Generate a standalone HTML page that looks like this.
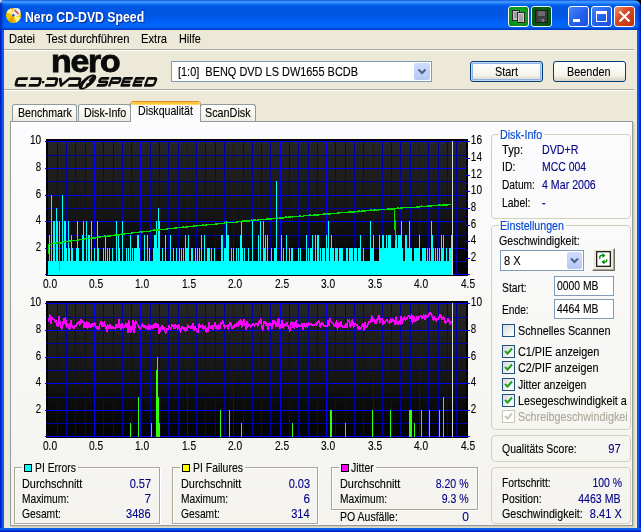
<!DOCTYPE html>
<html><head><meta charset="utf-8"><title>Nero CD-DVD Speed</title>
<style>
html,body{margin:0;padding:0;}
body{width:641px;height:532px;overflow:hidden;position:relative;background:#ece9d8;font-family:"Liberation Sans",sans-serif;font-size:11px;color:#000;}
.abs{position:absolute;}
.t{position:absolute;white-space:nowrap;line-height:12px;font-size:12.4px;margin-top:-0.35px;-webkit-text-stroke:0.12px currentColor;}
.v{color:#000088;}
#title{position:absolute;left:0;top:0;width:641px;height:30px;border-radius:4px 7px 0 0;background:linear-gradient(to bottom,#0a48d8 0%,#3a94ff 4%,#3a94ff 8%,#1070f0 14%,#0058e8 20%,#0054e0 35%,#0056e4 50%,#005cf0 65%,#0066fc 80%,#0066fc 90%,#0050e0 94%,#0034c0 100%);}
#bl{position:absolute;left:0;top:30px;width:4px;height:502px;background:linear-gradient(to right,#0019cf 0,#0831d9 40%,#166aee 70%,#0855dd 100%);}
#br{position:absolute;left:637px;top:30px;width:4px;height:502px;background:linear-gradient(to left,#0019cf 0,#0831d9 40%,#166aee 70%,#0855dd 100%);}
#bb{position:absolute;left:0;top:528px;width:641px;height:4px;background:linear-gradient(to bottom,#0855dd 0,#166aee 30%,#0831d9 60%,#0019cf 100%);}
#ttext{position:absolute;left:25px;top:9.2px;color:#fff;font-weight:bold;font-size:14.3px;line-height:16px;text-shadow:1px 1px 1px #0a2a8a;white-space:nowrap;}
.cb{position:absolute;top:6px;width:19px;height:19px;border:1px solid #fff;border-radius:3px;}
.sep{position:absolute;left:4px;width:630px;height:1px;}
#tabpage{position:absolute;left:10px;top:121px;width:621px;height:403px;background:linear-gradient(to bottom,#fcfcfe 0,#f4f3ee 100%);border:1px solid #919b9c;box-shadow:1px 1px 0 #d2cdb8, 2px 2px 0 #dedac6;}
.tab{position:absolute;top:104px;height:17px;border:1px solid #919b9c;border-bottom:none;border-radius:3px 3px 0 0;background:linear-gradient(to bottom,#ffffff 0,#f5f4ea 60%,#ecebe0 100%);}
.gb{position:absolute;border:1px solid #d0d0bf;border-radius:4px;}
.gl{position:absolute;white-space:nowrap;font-size:11px;line-height:12px;color:#0046d5;background:#f8f8f6;padding:0 1px;}
.btn{position:absolute;border:1px solid #003c74;border-radius:3px;background:linear-gradient(to bottom,#ffffff 0,#f5f4ea 70%,#d6d0c5 100%);box-sizing:border-box;text-align:center;font-size:11px;}
.edit{position:absolute;border:1px solid #7f9db9;background:#fff;box-sizing:border-box;}
.chk{position:absolute;width:11px;height:11px;border:1px solid #1c5180;background:linear-gradient(135deg,#dcdcd7 0,#ffffff 100%);}
.gbe{position:absolute;border:1px solid #a7a697;box-shadow:1px 1px 0 #fff, inset 1px 1px 0 #fff;}
#root{position:absolute;left:0;top:0;width:641px;height:532px;will-change:transform;}

</style></head>
<body>
<div id="root">
<div class="abs" style="left:0;top:0;width:8px;height:8px;background:#f0d8d4;"></div><div class="abs" style="left:633px;top:0;width:8px;height:8px;background:#000;"></div>
<div id="title"></div>
<div class="abs" style="left:0;top:3px;width:4px;height:27px;background:linear-gradient(to right,rgba(0,10,150,0.65),rgba(0,20,180,0.35) 60%,rgba(0,30,200,0));"></div><div class="abs" style="left:637px;top:6px;width:4px;height:24px;background:linear-gradient(to left,rgba(0,10,150,0.75),rgba(0,20,180,0.4) 60%,rgba(0,30,200,0));"></div>
<div id="bl"></div><div id="br"></div><div id="bb"></div>
<!-- title icon -->
<svg class="abs" style="left:5px;top:7px" width="18" height="18" viewBox="0 0 18 18">
<circle cx="8.5" cy="8.5" r="7.5" fill="#f7c400"/>
<path d="M8.5 8.5 L1.5 5 A7.5 7.5 0 0 1 6 1.4 Z" fill="#fff28a"/>
<path d="M8.5 8.5 L15.7 10.5 A7.5 7.5 0 0 1 11.5 15.4 Z" fill="#fff28a"/>
<path d="M8.5 8.5 L3 13.5 A7.5 7.5 0 0 0 8 16 Z" fill="#e0a000"/>
<circle cx="11.5" cy="5" r="4" fill="#ececec"/>
<path d="M9.5 3 L13.5 7" stroke="#e03010" stroke-width="1.2"/>
<circle cx="8.3" cy="8.3" r="1.3" fill="#2a62d0"/>
</svg>
<div id="ttext" style="transform-origin:0 0;transform:scale(0.857,1);">Nero CD-DVD Speed</div>
<!-- caption buttons -->
<div class="cb" style="left:508px;border-color:#f0fff0;background:radial-gradient(circle at 50% 45%,#1fc030 0,#10a520 45%,#087a14 100%);"></div>
<div class="cb" style="left:531px;border-color:#e8f8e0;background:radial-gradient(circle at 50% 45%,#0c7014 0,#08600f 50%,#054a0a 100%);"></div>
<div class="cb" style="left:568px;background:linear-gradient(135deg,#4886fa 0,#2462ee 50%,#1c50dc 100%);"></div>
<div class="cb" style="left:591px;background:linear-gradient(135deg,#4886fa 0,#2462ee 50%,#1c50dc 100%);"></div>
<div class="cb" style="left:614px;background:linear-gradient(135deg,#f09070 0,#d84820 40%,#c03010 100%);"></div>
<svg class="abs" style="left:508px;top:6px" width="130" height="21" viewBox="0 0 130 21">
<!-- copy icon -->
<rect x="4.500" y="4.500" width="7" height="10" fill="#c4c4c4" stroke="#2a2a2a" stroke-width="1"/>
<path d="M6 7h4M6 9h4M6 11h4" stroke="#7a7a7a" stroke-width="1"/>
<rect x="9.500" y="6.500" width="7" height="10" fill="#d0d0d0" stroke="#2a2a2a" stroke-width="1"/>
<path d="M11 9h4M11 11h4M11 13h4M11 15h4" stroke="#7a7a7a" stroke-width="1"/>
<!-- floppy -->
<rect x="27.500" y="4.500" width="12" height="12" fill="#3c3c3c" stroke="#1a1a1a" stroke-width="1"/>
<rect x="30" y="5" width="7" height="5" fill="#6a6a6a"/>
<rect x="31" y="12" width="6" height="4" fill="#4a4a4a"/><rect x="34" y="13" width="2" height="3" fill="#777"/>
<!-- min -->
<rect x="65" y="13" width="7" height="3" fill="#fff"/>
<!-- max -->
<rect x="88.500" y="6.500" width="10" height="9" fill="none" stroke="#fff" stroke-width="1"/>
<rect x="88" y="5" width="11" height="3" fill="#fff"/>
<!-- close -->
<path d="M111.500 5.500 L121.500 15.500 M121.500 5.500 L111.500 15.500" stroke="#fff" stroke-width="2.200"/>
</svg>

<!-- menu -->
<div class="t" style="left:9.300px;top:33.05px;margin-left:-0.7px;transform-origin:0 0;transform:scaleX(0.902);">Datei</div>
<div class="t" style="left:46.700px;top:33.05px;margin-left:-0.7px;transform-origin:0 0;transform:scaleX(0.905);">Test durchführen</div>
<div class="t" style="left:141.900px;top:33.05px;margin-left:-0.7px;transform-origin:0 0;transform:scaleX(0.902);">Extra</div>
<div class="t" style="left:179.600px;top:33.05px;margin-left:-0.7px;transform-origin:0 0;transform:scaleX(0.875);">Hilfe</div>
<div class="sep" style="top:49px;background:#aca899;"></div>
<div class="sep" style="top:50px;background:#fff;"></div>
<div class="sep" style="top:89px;background:#aca899;"></div>
<div class="sep" style="top:90px;background:#fff;"></div>

<!-- logo -->
<div class="abs" id="nero" style="left:50.5px;top:44.300px;font-weight:bold;font-size:31px;line-height:36px;letter-spacing:-1.1px;transform-origin:0 0;transform:scale(1.09,1);color:#0a0a0a;-webkit-text-stroke:0.9px #0a0a0a;">nero</div>
<svg class="abs" style="left:0;top:70px" width="170" height="22" viewBox="0 70 170 22">
<g transform="translate(16.800,77.300) skewX(-14)" fill="none" stroke="#0c0c0c" stroke-width="2.700" stroke-linejoin="round">
<path d="M11.3 1.300 H2.6 Q0.9 1.300 0.9 3 V6.400 Q0.9 8.100 2.6 8.100 H11.3"/>
<path d="M13.9 1.300 H22.6 Q24.3 1.300 24.3 3 V6.400 Q24.3 8.100 22.6 8.100 H13.9"/>
<path d="M26.300 3.600 h2.300 v2.300 h-2.300 z" fill="#0c0c0c" stroke="none"/>
<path d="M30.3 1.300 H39.0 Q40.7 1.300 40.7 3 V6.400 Q40.7 8.100 39.0 8.100 H30.3"/>
<path d="M43.4 0.600 L46.4 8.100 L53.6 0.600"/>
<path d="M53.5 1.300 H62.2 Q63.9 1.300 63.9 3 V6.400 Q63.9 8.100 62.2 8.100 H53.5"/>
</g>
<g transform="translate(87.500,82) rotate(-38)">
<ellipse cx="0" cy="0" rx="10.500" ry="4.600" fill="#0c0c0c"/>
<path d="M-8 1.500 Q-2 -3.500 8 -1.500 Q0 -1 -5 2.500 Z" fill="#ece9d8"/>
<ellipse cx="0.500" cy="0.300" rx="1.600" ry="1" fill="#ece9d8"/>
</g>
<g transform="translate(99.800,77.200) skewX(-20) scale(0.965,1.1)" fill="none" stroke="#0c0c0c" stroke-width="2.500" stroke-linejoin="round">
<path d="M10 1 H2.600 Q1 1 1 2.600 Q1 4.200 2.600 4.200 H8 Q9.600 4.200 9.600 5.800 Q9.600 7.500 8 7.500 H0"/>
<path d="M13.200 8.500 V1 H20.500 Q22.200 1 22.200 3 Q22.200 5 20.500 5 H13.200"/>
<path d="M34.500 1 H25.700 V7.500 H34.500 M25.700 4.200 H33.500"/>
<path d="M46.800 1 H38 V7.500 H46.800 M38 4.200 H45.800"/>
<path d="M50.200 1 H57 Q59.200 1 59.200 3 V5.500 Q59.200 7.500 57 7.500 H50.200 Z"/>
</g>
</svg>

<!-- drive combo -->
<div class="edit" style="left:171px;top:61px;width:261px;height:21px;"></div>
<div class="t" style="left:178.500px;top:66.05px;margin-left:-0.7px;transform-origin:0 0;transform:scaleX(0.883);">[1:0]&nbsp; BENQ DVD LS DW1655 BCDB</div>
<div class="abs" style="left:414px;top:63px;width:16px;height:17px;border-radius:2px;background:linear-gradient(to bottom,#cfdcfd 0,#b4c8f6 100%);"></div>
<svg class="abs" style="left:414px;top:63px" width="16" height="17"><path d="M4.500 6.500 L8 10 L11.500 6.500" fill="none" stroke="#4d6185" stroke-width="2"/></svg>

<div class="btn" style="left:470px;top:61px;width:73px;height:21px;box-shadow:inset 0 0 0 1px #c4d8fa, inset 0 0 0 2px #90b0ea;"></div><div class="t" style="left:495.400px;top:66.05px;margin-left:-0.7px;transform-origin:0 0;transform:scaleX(0.879);">Start</div>
<div class="btn" style="left:553px;top:61px;width:73px;height:21px;"></div><div class="t" style="left:568px;top:66.05px;margin-left:-0.7px;transform-origin:0 0;transform:scaleX(0.877);">Beenden</div>

<!-- tabs -->
<div class="tab" style="left:12px;width:63px;"></div>
<div class="tab" style="left:78px;width:51px;"></div>
<div class="tab" style="left:200px;width:54px;"></div>
<div id="tabpage"></div>
<div class="tab" style="left:130px;top:101px;width:69px;height:18px;background:#fcfcfe;border-top:3px solid #ffc73c;border-radius:3px 3px 0 0;z-index:3;box-shadow:inset 0 1px 0 #ffd76a;"></div><div class="abs" style="left:132px;top:101px;width:67px;height:1px;background:#e68b2c;z-index:4;"></div>
<div class="t" style="left:18.500px;top:107.05px;margin-left:-0.7px;transform-origin:0 0;transform:scaleX(0.858);">Benchmark</div>
<div class="t" style="left:84.700px;top:107.05px;margin-left:-0.7px;transform-origin:0 0;transform:scaleX(0.865);">Disk-Info</div>
<div class="t" style="left:138.600px;top:105.05px;z-index:4;margin-left:-0.7px;transform-origin:0 0;transform:scaleX(0.857);">Diskqualität</div>
<div class="t" style="left:205.500px;top:107.05px;margin-left:-0.7px;transform-origin:0 0;transform:scaleX(0.871);">ScanDisk</div>

<!-- charts -->
<svg class="abs" style="left:0;top:0" width="490" height="460" viewBox="0 0 490 460" shape-rendering="crispEdges">
<defs><linearGradient id="g139" x1="0" y1="0" x2="0" y2="1"><stop offset="0" stop-color="#262626"/><stop offset="0.55" stop-color="#151515"/><stop offset="1" stop-color="#000"/></linearGradient></defs>
<rect x="46" y="139" width="422" height="137" fill="#000"/>
<rect x="48" y="141" width="418" height="134" fill="url(#g139)"/>
<rect x="57" y="141" width="1" height="134" fill="#00009c"/>
<rect x="66" y="141" width="1" height="134" fill="#00009c"/>
<rect x="75" y="141" width="1" height="134" fill="#00009c"/>
<rect x="85" y="141" width="1" height="134" fill="#00009c"/>
<rect x="94" y="141" width="1" height="134" fill="#0000ee"/>
<rect x="103" y="141" width="1" height="134" fill="#00009c"/>
<rect x="113" y="141" width="1" height="134" fill="#00009c"/>
<rect x="122" y="141" width="1" height="134" fill="#00009c"/>
<rect x="131" y="141" width="1" height="134" fill="#00009c"/>
<rect x="140" y="141" width="1" height="134" fill="#0000ee"/>
<rect x="150" y="141" width="1" height="134" fill="#00009c"/>
<rect x="159" y="141" width="1" height="134" fill="#00009c"/>
<rect x="168" y="141" width="1" height="134" fill="#00009c"/>
<rect x="178" y="141" width="1" height="134" fill="#00009c"/>
<rect x="187" y="141" width="1" height="134" fill="#0000ee"/>
<rect x="196" y="141" width="1" height="134" fill="#00009c"/>
<rect x="205" y="141" width="1" height="134" fill="#00009c"/>
<rect x="215" y="141" width="1" height="134" fill="#00009c"/>
<rect x="224" y="141" width="1" height="134" fill="#00009c"/>
<rect x="233" y="141" width="1" height="134" fill="#0000ee"/>
<rect x="243" y="141" width="1" height="134" fill="#00009c"/>
<rect x="252" y="141" width="1" height="134" fill="#00009c"/>
<rect x="261" y="141" width="1" height="134" fill="#00009c"/>
<rect x="270" y="141" width="1" height="134" fill="#00009c"/>
<rect x="280" y="141" width="1" height="134" fill="#0000ee"/>
<rect x="289" y="141" width="1" height="134" fill="#00009c"/>
<rect x="298" y="141" width="1" height="134" fill="#00009c"/>
<rect x="308" y="141" width="1" height="134" fill="#00009c"/>
<rect x="317" y="141" width="1" height="134" fill="#00009c"/>
<rect x="326" y="141" width="1" height="134" fill="#0000ee"/>
<rect x="335" y="141" width="1" height="134" fill="#00009c"/>
<rect x="345" y="141" width="1" height="134" fill="#00009c"/>
<rect x="354" y="141" width="1" height="134" fill="#00009c"/>
<rect x="363" y="141" width="1" height="134" fill="#00009c"/>
<rect x="373" y="141" width="1" height="134" fill="#0000ee"/>
<rect x="382" y="141" width="1" height="134" fill="#00009c"/>
<rect x="391" y="141" width="1" height="134" fill="#00009c"/>
<rect x="400" y="141" width="1" height="134" fill="#00009c"/>
<rect x="410" y="141" width="1" height="134" fill="#00009c"/>
<rect x="419" y="141" width="1" height="134" fill="#0000ee"/>
<rect x="428" y="141" width="1" height="134" fill="#00009c"/>
<rect x="438" y="141" width="1" height="134" fill="#00009c"/>
<rect x="447" y="141" width="1" height="134" fill="#00009c"/>
<rect x="456" y="141" width="1" height="134" fill="#00009c"/>
<rect x="45" y="274" width="421" height="1" fill="#0000fa"/>
<rect x="46" y="261" width="420" height="1" fill="#0000a4"/>
<rect x="45" y="248" width="421" height="1" fill="#0000fa"/>
<rect x="46" y="235" width="420" height="1" fill="#0000a4"/>
<rect x="45" y="221" width="421" height="1" fill="#0000fa"/>
<rect x="46" y="208" width="420" height="1" fill="#0000a4"/>
<rect x="45" y="195" width="421" height="1" fill="#0000fa"/>
<rect x="46" y="181" width="420" height="1" fill="#0000a4"/>
<rect x="45" y="168" width="421" height="1" fill="#0000fa"/>
<rect x="46" y="155" width="420" height="1" fill="#0000a4"/>
<rect x="45" y="141" width="421" height="1" fill="#0000fa"/>
<path d="M48 275V261H49V275ZM49 275V235H50V275ZM50 275V261H51V275ZM51 275V195H52V275ZM52 275V261H53V275ZM53 275V221H55V275ZM55 275V261H56V275ZM56 275V208H57V275ZM57 275V221H58V275ZM58 275V261H59V275ZM59 275V221H60V275ZM60 275V261H62V275ZM62 275V195H63V275ZM63 275V261H64V275ZM64 275V221H66V275ZM66 275V248H67V275ZM67 275V261H68V275ZM68 275V221H69V275ZM69 275V248H70V275ZM70 275V261H71V275ZM71 275V235H72V275ZM72 275V248H73V275ZM73 275V261H76V275ZM76 275V248H77V275ZM77 275V221H78V275ZM78 275V248H79V275ZM79 275V261H82V275ZM82 275V235H83V275ZM83 275V221H84V275ZM84 275V261H86V275ZM86 275V221H87V275ZM87 275V261H88V275ZM88 275V235H90V275ZM90 275V261H91V275ZM91 275V221H92V275ZM92 275V261H94V275ZM94 275V248H95V275ZM95 275V261H97V275ZM97 275V221H98V275ZM98 275V248H99V275ZM99 275V261H103V275ZM103 275V248H104V275ZM104 275V261H105V275ZM105 275V235H106V275ZM106 275V261H107V275ZM107 275V248H108V275ZM108 275V261H109V275ZM109 275V248H110V275ZM110 275V261H112V275ZM112 275V248H113V275ZM113 275V261H116V275ZM116 275V221H117V275ZM117 275V261H118V275ZM118 275V235H119V275ZM119 275V248H120V275ZM120 275V261H122V275ZM122 275V221H123V275ZM123 275V261H126V275ZM126 275V248H127V275ZM127 275V261H128V275ZM128 275V248H129V275ZM129 275V261H130V275ZM130 275V235H131V275ZM131 275V261H132V275ZM132 275V248H133V275ZM133 275V261H134V275ZM134 275V248H137V275ZM137 275V235H139V275ZM139 275V248H140V275ZM140 275V261H144V275ZM144 275V235H145V275ZM145 275V261H147V275ZM147 275V235H148V275ZM148 275V261H149V275ZM149 275V248H150V275ZM150 275V261H153V275ZM153 275V248H154V275ZM154 275V235H156V275ZM156 275V221H157V275ZM157 275V248H158V275ZM158 275V208H159V275ZM159 275V221H160V275ZM160 275V261H162V275ZM162 275V248H163V275ZM163 275V261H165V275ZM165 275V235H166V275ZM166 275V261H170V275ZM170 275V235H171V275ZM171 275V261H173V275ZM173 275V248H174V275ZM174 275V261H176V275ZM176 275V248H177V275ZM177 275V261H179V275ZM179 275V248H180V275ZM180 275V261H181V275ZM181 275V248H182V275ZM182 275V261H183V275ZM183 275V248H184V275ZM184 275V261H185V275ZM185 275V235H186V275ZM186 275V248H188V275ZM188 275V235H189V275ZM189 275V261H191V275ZM191 275V248H193V275ZM193 275V261H195V275ZM195 275V248H196V275ZM196 275V261H197V275ZM197 275V248H198V275ZM198 275V261H199V275ZM199 275V248H200V275ZM200 275V261H201V275ZM201 275V235H202V275ZM202 275V261H204V275ZM204 275V235H205V275ZM205 275V261H207V275ZM207 275V248H210V275ZM210 275V261H211V275ZM211 275V248H212V275ZM212 275V261H214V275ZM214 275V248H215V275ZM215 275V261H221V275ZM221 275V235H223V275ZM223 275V261H224V275ZM224 275V248H226V275ZM226 275V221H227V275ZM227 275V235H229V275ZM229 275V261H231V275ZM231 275V248H232V275ZM232 275V261H233V275ZM233 275V248H234V275ZM234 275V261H236V275ZM236 275V248H237V275ZM237 275V261H238V275ZM238 275V248H239V275ZM239 275V261H240V275ZM240 275V235H241V275ZM241 275V221H242V275ZM242 275V248H243V275ZM243 275V261H244V275ZM244 275V248H245V275ZM245 275V261H248V275ZM248 275V248H249V275ZM249 275V261H252V275ZM252 275V221H253V275ZM253 275V261H258V275ZM258 275V235H259V275ZM259 275V261H260V275ZM260 275V221H261V275ZM261 275V261H263V275ZM263 275V221H264V275ZM264 275V248H265V275ZM265 275V235H266V275ZM266 275V261H267V275ZM267 275V235H268V275ZM268 275V261H271V275ZM271 275V248H272V275ZM272 275V261H274V275ZM274 275V248H276V275ZM276 275V181H277V275ZM277 275V261H281V275ZM281 275V235H282V275ZM282 275V261H283V275ZM283 275V248H284V275ZM284 275V261H286V275ZM286 275V235H287V275ZM287 275V261H289V275ZM289 275V248H290V275ZM290 275V261H291V275ZM291 275V248H293V275ZM293 275V261H298V275ZM298 275V248H299V275ZM299 275V261H300V275ZM300 275V248H301V275ZM301 275V261H306V275ZM306 275V235H307V275ZM307 275V261H308V275ZM308 275V248H309V275ZM309 275V261H310V275ZM310 275V248H312V275ZM312 275V235H313V275ZM313 275V261H315V275ZM315 275V235H316V275ZM316 275V261H317V275ZM317 275V235H319V275ZM319 275V261H320V275ZM320 275V248H321V275ZM321 275V261H322V275ZM322 275V248H325V275ZM325 275V261H326V275ZM326 275V235H327V275ZM327 275V248H328V275ZM328 275V221H329V275ZM329 275V261H330V275ZM330 275V248H331V275ZM331 275V235H332V275ZM332 275V248H334V275ZM334 275V261H335V275ZM335 275V248H338V275ZM338 275V261H339V275ZM339 275V248H343V275ZM343 275V261H346V275ZM346 275V248H348V275ZM348 275V261H349V275ZM349 275V248H353V275ZM353 275V261H354V275ZM354 275V248H357V275ZM357 275V261H358V275ZM358 275V248H360V275ZM360 275V235H361V275ZM361 275V261H363V275ZM363 275V248H364V275ZM364 275V261H370V275ZM370 275V221H371V275ZM371 275V248H373V275ZM373 275V235H374V275ZM374 275V261H379V275ZM379 275V235H380V275ZM380 275V248H382V275ZM382 275V235H384V275ZM384 275V248H386V275ZM386 275V235H387V275ZM387 275V248H388V275ZM388 275V235H391V275ZM391 275V248H395V275ZM395 275V235H397V275ZM397 275V248H398V275ZM398 275V235H401V275ZM401 275V221H402V275ZM402 275V248H403V275ZM403 275V261H405V275ZM405 275V235H407V275ZM407 275V248H409V275ZM409 275V221H410V275ZM410 275V248H412V275ZM412 275V261H414V275ZM414 275V248H419V275ZM419 275V235H420V275ZM420 275V261H422V275ZM422 275V248H426V275ZM426 275V261H427V275ZM427 275V248H428V275ZM428 275V261H429V275ZM429 275V248H430V275ZM430 275V261H431V275ZM431 275V221H432V275ZM432 275V235H433V275ZM433 275V248H434V275ZM434 275V261H435V275ZM435 275V248H436V275ZM436 275V261H437V275ZM437 275V248H438V275ZM438 275V261H439V275ZM439 275V248H440V275ZM440 275V261H441V275ZM441 275V235H442V275ZM442 275V248H443V275ZM443 275V235H444V275ZM444 275V261H446V275ZM446 275V248H447V275ZM447 275V261H449V275ZM449 275V248H451V275ZM451 275V235H452V275ZM452 275V248H453V275Z" fill="#00ffff"/>
<path d="M48.0 245.0 L49.0 244.1 L50.0 244.7 L51.0 244.5 L52.0 243.6 L53.0 243.4 L54.0 243.7 L55.0 243.5 L56.0 242.9 L57.0 243.6 L58.0 242.6 L59.0 242.9 L60.0 242.7 L61.0 243.0 L62.0 242.4 L63.0 242.3 L64.0 242.1 L65.0 241.6 L66.0 241.8 L67.0 241.2 L68.0 241.9 L69.0 241.7 L70.0 240.8 L71.0 241.1 L72.0 240.5 L73.0 240.8 L74.0 240.2 L75.0 240.5 L76.0 240.3 L77.0 240.2 L78.0 240.0 L79.0 239.9 L80.0 239.3 L81.0 239.6 L82.0 239.9 L83.0 239.3 L84.0 239.6 L85.0 238.6 L86.0 238.9 L87.0 238.4 L88.0 238.6 L89.0 238.5 L90.0 238.8 L91.0 238.2 L92.0 238.1 L93.0 238.3 L94.0 237.8 L95.0 238.1 L96.0 237.1 L97.0 237.4 L98.0 237.3 L99.0 237.1 L100.0 237.0 L101.0 236.5 L102.0 236.7 L103.0 236.6 L104.0 236.5 L105.0 236.0 L106.0 236.2 L107.0 236.5 L108.0 236.0 L109.0 235.8 L110.0 236.1 L111.0 235.6 L112.0 235.5 L113.0 235.3 L114.0 235.2 L115.0 235.1 L116.0 234.9 L117.0 235.2 L118.0 235.1 L119.0 235.0 L120.0 234.8 L121.0 234.3 L122.0 233.8 L123.0 234.1 L124.0 234.0 L125.0 233.8 L126.0 233.7 L127.0 233.6 L128.0 233.5 L129.0 233.3 L130.0 233.6 L131.0 233.1 L132.0 233.0 L133.0 232.9 L134.0 232.7 L135.0 232.6 L136.0 232.5 L137.0 232.8 L138.0 232.7 L139.0 232.2 L140.0 231.6 L141.0 231.9 L142.0 232.2 L143.0 231.3 L144.0 231.6 L145.0 231.5 L146.0 231.7 L147.0 231.6 L148.0 231.1 L149.0 231.4 L150.0 231.3 L151.0 230.8 L152.0 230.7 L153.0 230.5 L154.0 230.0 L155.0 230.3 L156.0 230.2 L157.0 230.1 L158.0 230.0 L159.0 230.3 L160.0 229.4 L161.0 229.2 L162.0 229.5 L163.0 229.4 L164.0 229.3 L165.0 229.2 L166.0 229.5 L167.0 229.0 L168.0 228.9 L169.0 228.4 L170.0 228.7 L171.0 228.6 L172.0 228.8 L173.0 228.3 L174.0 228.2 L175.0 228.1 L176.0 228.0 L177.0 227.5 L178.0 227.8 L179.0 227.7 L180.0 227.2 L181.0 227.5 L182.0 227.4 L183.0 226.9 L184.0 227.6 L185.0 227.1 L186.0 226.6 L187.0 227.2 L188.0 226.3 L189.0 226.6 L190.0 226.9 L191.0 226.4 L192.0 226.3 L193.0 226.2 L194.0 226.1 L195.0 225.6 L196.0 225.9 L197.0 225.8 L198.0 225.7 L199.0 225.2 L200.0 225.5 L201.0 225.8 L202.0 225.7 L203.0 224.8 L204.0 225.1 L205.0 225.4 L206.0 224.9 L207.0 224.8 L208.0 224.7 L209.0 224.6 L210.0 224.1 L211.0 224.4 L212.0 224.3 L213.0 224.6 L214.0 224.1 L215.0 224.4 L216.0 223.5 L217.0 224.2 L218.0 223.7 L219.0 223.2 L220.0 223.5 L221.0 223.4 L222.0 223.3 L223.0 223.2 L224.0 223.5 L225.0 222.6 L226.0 222.5 L227.0 222.4 L228.0 222.7 L229.0 222.6 L230.0 222.5 L231.0 222.4 L232.0 222.4 L233.0 222.3 L234.0 222.2 L235.0 222.5 L236.0 222.4 L237.0 221.9 L238.0 221.8 L239.0 221.7 L240.0 221.6 L241.0 221.5 L242.0 221.4 L243.0 220.9 L244.0 220.8 L245.0 221.1 L246.0 221.0 L247.0 220.9 L248.0 220.8 L249.0 221.1 L250.0 220.7 L251.0 220.2 L252.0 220.1 L253.0 220.4 L254.0 219.9 L255.0 220.2 L256.0 220.1 L257.0 220.4 L258.0 219.9 L259.0 219.8 L260.0 219.7 L261.0 219.6 L262.0 219.2 L263.0 219.5 L264.0 219.8 L265.0 219.3 L266.0 219.2 L267.0 219.1 L268.0 219.0 L269.0 218.9 L270.0 218.8 L271.0 219.1 L272.0 218.3 L273.0 218.6 L274.0 218.5 L275.0 218.4 L276.0 218.3 L277.0 218.2 L278.0 218.1 L279.0 218.4 L280.0 217.9 L281.0 218.3 L282.0 217.8 L283.0 218.1 L284.0 217.2 L285.0 217.5 L286.0 217.0 L287.0 217.7 L288.0 217.6 L289.0 216.8 L290.0 217.1 L291.0 216.6 L292.0 216.9 L293.0 216.8 L294.0 216.7 L295.0 216.6 L296.0 216.5 L297.0 216.9 L298.0 216.4 L299.0 216.7 L300.0 215.8 L301.0 216.5 L302.0 216.4 L303.0 216.3 L304.0 215.5 L305.0 215.8 L306.0 215.3 L307.0 215.2 L308.0 215.5 L309.0 215.4 L310.0 214.9 L311.0 215.3 L312.0 215.6 L313.0 215.1 L314.0 215.0 L315.0 214.9 L316.0 215.2 L317.0 214.4 L318.0 215.1 L319.0 214.6 L320.0 214.5 L321.0 214.4 L322.0 214.3 L323.0 214.3 L324.0 213.8 L325.0 214.1 L326.0 213.6 L327.0 213.9 L328.0 213.8 L329.0 214.2 L330.0 214.1 L331.0 213.6 L332.0 213.5 L333.0 213.8 L334.0 213.4 L335.0 213.3 L336.0 213.6 L337.0 213.1 L338.0 213.0 L339.0 213.3 L340.0 212.9 L341.0 212.4 L342.0 212.7 L343.0 212.6 L344.0 212.5 L345.0 212.5 L346.0 212.8 L347.0 212.3 L348.0 212.2 L349.0 212.1 L350.0 212.1 L351.0 212.0 L352.0 211.9 L353.0 212.2 L354.0 212.1 L355.0 211.7 L356.0 211.6 L357.0 211.9 L358.0 211.8 L359.0 210.9 L360.0 211.7 L361.0 211.2 L362.0 210.7 L363.0 211.4 L364.0 210.9 L365.0 210.9 L366.0 210.8 L367.0 210.7 L368.0 210.2 L369.0 210.5 L370.0 210.5 L371.0 210.0 L372.0 210.3 L373.0 210.2 L374.0 209.8 L375.0 210.1 L376.0 210.0 L377.0 210.3 L378.0 210.2 L379.0 209.8 L380.0 209.7 L381.0 209.6 L382.0 209.5 L383.0 209.5 L384.0 209.4 L385.0 209.3 L386.0 209.6 L387.0 209.2 L388.0 208.7 L389.0 209.0 L390.0 208.9 L391.0 208.8 L392.0 208.8 L393.0 209.1 L394.0 208.6 L397.0 208.8 L398.0 207.9 L399.0 208.2 L400.0 208.2 L401.0 208.1 L402.0 208.0 L403.0 207.9 L404.0 207.5 L405.0 207.4 L406.0 207.3 L407.0 207.2 L408.0 207.6 L409.0 207.9 L410.0 207.4 L411.0 207.3 L412.0 207.7 L413.0 207.6 L414.0 207.1 L415.0 207.4 L416.0 207.4 L417.0 206.9 L418.0 206.8 L419.0 207.1 L420.0 206.3 L421.0 206.2 L422.0 206.1 L423.0 206.4 L424.0 206.8 L425.0 206.3 L426.0 206.2 L427.0 206.2 L428.0 206.1 L429.0 206.0 L430.0 205.9 L431.0 206.3 L432.0 205.8 L433.0 205.7 L434.0 205.2 L435.0 205.6 L436.0 205.5 L437.0 205.4 L438.0 205.4 L439.0 204.9 L440.0 205.2 L441.0 205.1 L442.0 205.5 L443.0 205.0 L444.0 204.5 L445.0 205.2 L446.0 204.8 L447.0 205.1 L448.0 204.6 L449.0 204.6 L450.0 204.5 L451.0 204.8" fill="none" stroke="#00e000" stroke-width="1.4" shape-rendering="crispEdges"/>
<rect x="59" y="243" width="1" height="28" fill="#00e000"/><rect x="48" y="245" width="1" height="9" fill="#00e000"/>
<path d="M394.3 209 L394.9 222 L395.6 240.5" fill="none" stroke="#00e000" stroke-width="1.4" shape-rendering="crispEdges"/>
<rect x="452" y="141" width="1" height="134" fill="#d8d8d8"/>
<rect x="466" y="274" width="4" height="1" fill="#0000ff"/>
<rect x="466" y="266" width="2" height="1" fill="#0000ff"/>
<rect x="466" y="258" width="4" height="1" fill="#0000ff"/>
<rect x="466" y="250" width="2" height="1" fill="#0000ff"/>
<rect x="466" y="241" width="4" height="1" fill="#0000ff"/>
<rect x="466" y="233" width="2" height="1" fill="#0000ff"/>
<rect x="466" y="225" width="4" height="1" fill="#0000ff"/>
<rect x="466" y="216" width="2" height="1" fill="#0000ff"/>
<rect x="466" y="208" width="4" height="1" fill="#0000ff"/>
<rect x="466" y="200" width="2" height="1" fill="#0000ff"/>
<rect x="466" y="191" width="4" height="1" fill="#0000ff"/>
<rect x="466" y="183" width="2" height="1" fill="#0000ff"/>
<rect x="466" y="175" width="4" height="1" fill="#0000ff"/>
<rect x="466" y="166" width="2" height="1" fill="#0000ff"/>
<rect x="466" y="158" width="4" height="1" fill="#0000ff"/>
<rect x="466" y="150" width="2" height="1" fill="#0000ff"/>
<rect x="466" y="141" width="4" height="1" fill="#0000ff"/>
<g font-family="Liberation Sans, sans-serif" font-size="12.500" fill="#000" stroke="#000" stroke-width="0.120" shape-rendering="auto">
<text x="35.8" y="251" textLength="5.4" lengthAdjust="spacingAndGlyphs">2</text>
<text x="35.8" y="224" textLength="5.4" lengthAdjust="spacingAndGlyphs">4</text>
<text x="35.8" y="198" textLength="5.4" lengthAdjust="spacingAndGlyphs">6</text>
<text x="35.8" y="171" textLength="5.4" lengthAdjust="spacingAndGlyphs">8</text>
<text x="30.0" y="144" textLength="11.2" lengthAdjust="spacingAndGlyphs">10</text>
<text x="470.800" y="261" textLength="5.4" lengthAdjust="spacingAndGlyphs">2</text>
<text x="470.800" y="244" textLength="5.4" lengthAdjust="spacingAndGlyphs">4</text>
<text x="470.800" y="228" textLength="5.4" lengthAdjust="spacingAndGlyphs">6</text>
<text x="470.800" y="211" textLength="5.4" lengthAdjust="spacingAndGlyphs">8</text>
<text x="470.800" y="194" textLength="11.2" lengthAdjust="spacingAndGlyphs">10</text>
<text x="470.800" y="178" textLength="11.2" lengthAdjust="spacingAndGlyphs">12</text>
<text x="470.800" y="161" textLength="11.2" lengthAdjust="spacingAndGlyphs">14</text>
<text x="470.800" y="144" textLength="11.2" lengthAdjust="spacingAndGlyphs">16</text>
<text x="42.9" y="288" textLength="14.200" lengthAdjust="spacingAndGlyphs">0.0</text>
<text x="88.9" y="288" textLength="14.200" lengthAdjust="spacingAndGlyphs">0.5</text>
<text x="134.9" y="288" textLength="14.200" lengthAdjust="spacingAndGlyphs">1.0</text>
<text x="181.9" y="288" textLength="14.200" lengthAdjust="spacingAndGlyphs">1.5</text>
<text x="227.9" y="288" textLength="14.200" lengthAdjust="spacingAndGlyphs">2.0</text>
<text x="274.9" y="288" textLength="14.200" lengthAdjust="spacingAndGlyphs">2.5</text>
<text x="320.9" y="288" textLength="14.200" lengthAdjust="spacingAndGlyphs">3.0</text>
<text x="367.9" y="288" textLength="14.200" lengthAdjust="spacingAndGlyphs">3.5</text>
<text x="413.9" y="288" textLength="14.200" lengthAdjust="spacingAndGlyphs">4.0</text>
<text x="460.9" y="288" textLength="14.200" lengthAdjust="spacingAndGlyphs">4.5</text>
</g>
</svg>
<svg class="abs" style="left:0;top:0" width="490" height="460" viewBox="0 0 490 460" shape-rendering="crispEdges">
<defs><linearGradient id="g301" x1="0" y1="0" x2="0" y2="1"><stop offset="0" stop-color="#262626"/><stop offset="0.55" stop-color="#151515"/><stop offset="1" stop-color="#000"/></linearGradient></defs>
<rect x="46" y="301" width="422" height="137" fill="#000"/>
<rect x="48" y="303" width="418" height="134" fill="url(#g301)"/>
<rect x="57" y="303" width="1" height="134" fill="#00009c"/>
<rect x="66" y="303" width="1" height="134" fill="#00009c"/>
<rect x="75" y="303" width="1" height="134" fill="#00009c"/>
<rect x="85" y="303" width="1" height="134" fill="#00009c"/>
<rect x="94" y="303" width="1" height="134" fill="#0000ee"/>
<rect x="103" y="303" width="1" height="134" fill="#00009c"/>
<rect x="113" y="303" width="1" height="134" fill="#00009c"/>
<rect x="122" y="303" width="1" height="134" fill="#00009c"/>
<rect x="131" y="303" width="1" height="134" fill="#00009c"/>
<rect x="140" y="303" width="1" height="134" fill="#0000ee"/>
<rect x="150" y="303" width="1" height="134" fill="#00009c"/>
<rect x="159" y="303" width="1" height="134" fill="#00009c"/>
<rect x="168" y="303" width="1" height="134" fill="#00009c"/>
<rect x="178" y="303" width="1" height="134" fill="#00009c"/>
<rect x="187" y="303" width="1" height="134" fill="#0000ee"/>
<rect x="196" y="303" width="1" height="134" fill="#00009c"/>
<rect x="205" y="303" width="1" height="134" fill="#00009c"/>
<rect x="215" y="303" width="1" height="134" fill="#00009c"/>
<rect x="224" y="303" width="1" height="134" fill="#00009c"/>
<rect x="233" y="303" width="1" height="134" fill="#0000ee"/>
<rect x="243" y="303" width="1" height="134" fill="#00009c"/>
<rect x="252" y="303" width="1" height="134" fill="#00009c"/>
<rect x="261" y="303" width="1" height="134" fill="#00009c"/>
<rect x="270" y="303" width="1" height="134" fill="#00009c"/>
<rect x="280" y="303" width="1" height="134" fill="#0000ee"/>
<rect x="289" y="303" width="1" height="134" fill="#00009c"/>
<rect x="298" y="303" width="1" height="134" fill="#00009c"/>
<rect x="308" y="303" width="1" height="134" fill="#00009c"/>
<rect x="317" y="303" width="1" height="134" fill="#00009c"/>
<rect x="326" y="303" width="1" height="134" fill="#0000ee"/>
<rect x="335" y="303" width="1" height="134" fill="#00009c"/>
<rect x="345" y="303" width="1" height="134" fill="#00009c"/>
<rect x="354" y="303" width="1" height="134" fill="#00009c"/>
<rect x="363" y="303" width="1" height="134" fill="#00009c"/>
<rect x="373" y="303" width="1" height="134" fill="#0000ee"/>
<rect x="382" y="303" width="1" height="134" fill="#00009c"/>
<rect x="391" y="303" width="1" height="134" fill="#00009c"/>
<rect x="400" y="303" width="1" height="134" fill="#00009c"/>
<rect x="410" y="303" width="1" height="134" fill="#00009c"/>
<rect x="419" y="303" width="1" height="134" fill="#0000ee"/>
<rect x="428" y="303" width="1" height="134" fill="#00009c"/>
<rect x="438" y="303" width="1" height="134" fill="#00009c"/>
<rect x="447" y="303" width="1" height="134" fill="#00009c"/>
<rect x="456" y="303" width="1" height="134" fill="#00009c"/>
<rect x="45" y="436" width="421" height="1" fill="#0000fa"/>
<rect x="46" y="423" width="420" height="1" fill="#0000a4"/>
<rect x="45" y="410" width="421" height="1" fill="#0000fa"/>
<rect x="46" y="397" width="420" height="1" fill="#0000a4"/>
<rect x="45" y="383" width="421" height="1" fill="#0000fa"/>
<rect x="46" y="370" width="420" height="1" fill="#0000a4"/>
<rect x="45" y="357" width="421" height="1" fill="#0000fa"/>
<rect x="46" y="343" width="420" height="1" fill="#0000a4"/>
<rect x="45" y="330" width="421" height="1" fill="#0000fa"/>
<rect x="46" y="317" width="420" height="1" fill="#0000a4"/>
<rect x="45" y="303" width="421" height="1" fill="#0000fa"/>
<path d="M130 437V423H131V437ZM138 437V397H139V437ZM151 437V423H152V437ZM156 437V370H157V437ZM157 437V357H158V437ZM158 437V397H159V437ZM159 437V423H160V437ZM220 437V410H221V437ZM229 437V410H230V437ZM241 437V423H242V437ZM292 437V423H293V437ZM330 437V410H331V437ZM331 437V410H332V437ZM345 437V423H346V437ZM372 437V410H373V437ZM390 437V410H391V437ZM409 437V410H410V437ZM410 437V410H411V437ZM411 437V410H412V437ZM414 437V423H415V437ZM421 437V410H422V437ZM429 437V410H430V437ZM439 437V410H440V437ZM443 437V397H444V437Z" fill="#30ff10"/>
<path d="M48.0 321.5 L49.0 319.6 L49.9 315.2 L51.0 323.4 L52.1 318.0 L53.0 319.7 L54.1 319.6 L55.0 321.5 L56.0 321.0 L56.9 324.5 L57.9 326.3 L58.9 316.9 L60.0 323.5 L60.7 325.7 L61.8 328.8 L62.9 324.1 L63.6 319.1 L64.3 323.4 L65.4 317.8 L66.5 326.9 L67.5 323.7 L68.5 326.9 L69.6 329.0 L70.7 320.6 L71.7 326.4 L72.4 326.2 L73.4 327.7 L74.1 328.0 L74.8 325.4 L75.8 326.5 L76.8 324.5 L77.9 322.9 L78.6 321.4 L79.6 324.9 L80.5 323.3 L81.2 319.8 L82.3 321.7 L83.2 321.4 L84.1 327.1 L85.0 322.6 L85.9 327.2 L86.8 322.2 L87.7 328.2 L88.7 323.3 L89.6 324.2 L90.5 327.2 L91.4 325.5 L92.1 323.5 L93.0 326.3 L93.7 324.4 L94.7 323.2 L95.8 327.1 L96.7 326.5 L97.4 328.9 L98.1 326.6 L99.1 329.2 L99.8 324.4 L100.8 321.9 L101.7 326.5 L102.4 322.7 L103.1 325.8 L104.2 322.0 L105.1 326.1 L106.0 326.8 L106.9 331.6 L107.6 325.3 L108.3 328.3 L109.0 328.6 L109.7 324.4 L110.7 328.3 L111.8 326.4 L112.5 328.2 L113.4 327.0 L114.4 328.5 L115.5 329.0 L116.2 324.3 L116.9 325.5 L118.0 327.0 L118.9 320.0 L119.9 325.9 L120.9 329.7 L121.8 323.8 L122.9 327.7 L123.9 327.9 L125.0 326.5 L125.9 323.6 L126.6 326.9 L127.3 324.2 L128.0 332.3 L128.7 321.2 L129.6 325.4 L130.6 332.4 L131.6 327.0 L132.5 329.1 L133.2 320.5 L134.1 332.5 L134.8 327.1 L135.5 320.6 L136.2 323.4 L137.2 323.8 L138.3 326.0 L139.2 327.2 L140.3 328.7 L141.3 326.9 L142.3 323.8 L143.0 325.8 L144.1 327.2 L144.8 325.9 L145.9 328.3 L147.0 326.3 L147.9 329.0 L148.6 324.4 L149.7 329.6 L150.8 326.2 L151.8 325.7 L152.8 328.7 L153.8 325.0 L154.5 323.5 L155.2 327.7 L156.1 323.8 L157.2 327.4 L158.2 324.8 L159.3 333.4 L160.3 329.8 L161.0 328.0 L162.1 325.7 L163.1 329.4 L163.8 327.2 L164.9 331.6 L165.8 332.8 L166.5 330.2 L167.2 328.5 L168.1 329.3 L169.0 325.8 L169.7 326.8 L170.8 328.9 L171.9 324.8 L173.0 325.7 L174.0 328.5 L174.9 324.8 L175.9 327.8 L176.6 326.1 L177.6 328.8 L178.6 324.5 L179.6 327.5 L180.5 332.0 L181.5 328.2 L182.4 326.5 L183.3 328.7 L184.0 327.7 L184.7 327.9 L185.4 331.0 L186.1 328.6 L186.8 330.4 L187.7 324.8 L188.7 327.2 L189.8 326.6 L190.8 328.6 L191.9 328.3 L192.6 323.5 L193.3 323.9 L194.2 330.1 L195.3 326.6 L196.2 329.3 L197.2 331.1 L198.2 332.3 L199.2 324.0 L200.1 326.8 L201.2 326.0 L202.3 325.1 L203.3 328.8 L204.4 328.3 L205.5 326.3 L206.2 331.9 L207.2 328.4 L207.9 331.2 L208.9 323.0 L209.9 327.5 L210.9 328.6 L211.9 326.0 L212.9 329.1 L214.0 325.8 L215.0 322.7 L216.0 328.7 L217.1 325.8 L218.0 329.2 L218.7 325.1 L219.7 328.4 L220.8 322.3 L221.8 323.8 L222.9 321.2 L223.8 324.6 L224.7 328.1 L225.7 327.1 L226.4 325.6 L227.3 326.2 L228.3 328.8 L229.4 324.1 L230.1 322.9 L230.8 323.6 L231.8 328.2 L232.8 326.6 L233.5 328.2 L234.2 325.1 L235.3 324.5 L236.3 326.3 L237.4 322.6 L238.4 325.9 L239.3 321.2 L240.0 324.6 L240.7 320.3 L241.7 327.0 L242.4 326.1 L243.5 319.8 L244.2 320.3 L244.9 323.8 L246.0 329.5 L246.9 321.7 L247.8 326.9 L248.7 324.2 L249.7 325.1 L250.7 326.9 L251.7 325.2 L252.7 324.1 L253.4 323.8 L254.3 325.8 L255.0 324.4 L256.1 323.9 L256.8 323.7 L257.8 326.0 L258.7 321.4 L259.8 322.6 L260.7 319.3 L261.8 326.5 L262.7 329.7 L263.8 321.3 L264.8 321.9 L265.8 324.8 L266.5 322.8 L267.2 324.8 L268.1 329.1 L269.2 323.2 L270.2 324.9 L271.1 323.8 L271.8 328.7 L272.9 320.7 L273.8 324.0 L274.7 321.3 L275.8 326.1 L276.8 326.7 L277.7 319.5 L278.7 318.9 L279.4 327.5 L280.1 328.5 L281.0 327.1 L281.9 320.4 L282.6 322.8 L283.3 327.9 L284.4 324.6 L285.4 324.0 L286.1 325.6 L286.8 322.4 L287.9 325.8 L289.0 328.1 L289.9 330.9 L290.9 322.7 L291.9 322.2 L293.0 326.8 L293.7 322.4 L294.4 328.0 L295.5 323.0 L296.2 321.0 L297.3 327.4 L298.4 325.1 L299.3 324.5 L300.0 326.1 L300.9 326.1 L302.0 324.0 L303.0 329.0 L303.7 323.6 L304.7 325.8 L305.4 327.2 L306.4 324.0 L307.5 326.7 L308.5 322.4 L309.2 325.6 L310.1 323.8 L311.0 323.8 L311.9 325.0 L313.0 325.4 L313.7 325.3 L314.4 325.1 L315.5 323.9 L316.6 325.3 L317.5 322.0 L318.6 321.2 L319.7 323.4 L320.4 327.0 L321.5 322.9 L322.4 323.1 L323.1 324.4 L324.1 326.2 L325.2 326.4 L326.2 326.0 L327.2 326.0 L328.1 321.1 L329.1 324.9 L330.0 318.7 L331.0 321.8 L331.9 322.2 L332.8 323.6 L333.7 323.9 L334.4 326.0 L335.5 326.3 L336.5 321.1 L337.5 329.2 L338.5 322.6 L339.4 324.2 L340.3 326.5 L341.0 322.0 L342.0 325.9 L343.0 327.5 L343.9 327.2 L344.9 327.0 L345.9 323.8 L346.8 327.1 L347.7 319.9 L348.8 321.2 L349.5 320.3 L350.4 326.8 L351.4 324.5 L352.5 319.4 L353.2 326.0 L353.9 326.9 L354.8 323.5 L355.9 324.7 L356.8 324.4 L357.7 326.4 L358.7 329.6 L359.6 326.9 L360.7 329.3 L361.8 325.7 L362.8 324.1 L363.9 329.8 L364.9 322.4 L366.0 327.6 L367.1 326.0 L368.1 324.3 L369.2 321.5 L369.9 322.2 L370.9 321.0 L372.0 316.2 L373.0 321.6 L373.7 319.3 L374.6 323.4 L375.7 323.3 L376.4 320.0 L377.3 321.4 L378.3 317.7 L379.0 315.9 L380.0 322.7 L380.9 318.8 L381.8 319.1 L382.5 318.5 L383.2 324.3 L383.9 323.2 L385.0 322.3 L386.0 320.3 L386.7 319.8 L387.8 321.0 L388.9 322.5 L389.8 323.0 L390.5 318.9 L391.5 322.4 L392.5 319.0 L393.6 320.8 L394.5 321.0 L395.2 324.3 L396.1 317.2 L397.2 323.9 L397.9 321.6 L398.8 323.7 L399.7 320.8 L400.4 323.8 L401.1 317.1 L402.1 323.1 L403.2 318.2 L404.3 317.0 L405.4 319.9 L406.4 319.1 L407.1 317.7 L408.0 316.3 L408.9 315.7 L409.9 317.8 L410.9 318.7 L411.6 314.6 L412.5 323.0 L413.4 316.6 L414.3 316.7 L415.0 320.9 L416.1 319.9 L416.8 316.8 L417.5 320.4 L418.5 317.0 L419.6 317.1 L420.6 315.6 L421.5 316.6 L422.2 318.6 L423.1 316.9 L423.8 315.1 L424.9 319.6 L425.6 314.9 L426.7 317.6 L427.7 317.1 L428.7 314.3 L429.7 313.0 L430.6 313.1 L431.3 314.4 L432.4 317.2 L433.4 319.7 L434.3 316.8 L435.4 320.4 L436.4 320.8 L437.1 318.4 L438.2 319.1 L439.1 317.1 L439.8 314.8 L440.9 315.8 L441.9 319.5 L442.6 318.8 L443.5 316.6 L444.4 318.5 L445.3 322.7 L446.3 321.5 L447.3 321.3 L448.2 318.3 L449.3 321.7 L450.4 323.8 L451.1 321.3" fill="none" stroke="#ff00ff" stroke-width="1.7" stroke-linejoin="round" shape-rendering="crispEdges"/>
<rect x="452" y="303" width="1" height="134" fill="#d8d8d8"/>
<rect x="466" y="436" width="4" height="1" fill="#0000ff"/>
<rect x="466" y="423" width="2" height="1" fill="#0000ff"/>
<rect x="466" y="410" width="4" height="1" fill="#0000ff"/>
<rect x="466" y="397" width="2" height="1" fill="#0000ff"/>
<rect x="466" y="383" width="4" height="1" fill="#0000ff"/>
<rect x="466" y="370" width="2" height="1" fill="#0000ff"/>
<rect x="466" y="357" width="4" height="1" fill="#0000ff"/>
<rect x="466" y="343" width="2" height="1" fill="#0000ff"/>
<rect x="466" y="330" width="4" height="1" fill="#0000ff"/>
<rect x="466" y="317" width="2" height="1" fill="#0000ff"/>
<rect x="466" y="303" width="4" height="1" fill="#0000ff"/>
<g font-family="Liberation Sans, sans-serif" font-size="12.500" fill="#000" stroke="#000" stroke-width="0.120" shape-rendering="auto">
<text x="35.8" y="413" textLength="5.4" lengthAdjust="spacingAndGlyphs">2</text>
<text x="470.800" y="413" textLength="5.4" lengthAdjust="spacingAndGlyphs">2</text>
<text x="35.8" y="386" textLength="5.4" lengthAdjust="spacingAndGlyphs">4</text>
<text x="470.800" y="386" textLength="5.4" lengthAdjust="spacingAndGlyphs">4</text>
<text x="35.8" y="360" textLength="5.4" lengthAdjust="spacingAndGlyphs">6</text>
<text x="470.800" y="360" textLength="5.4" lengthAdjust="spacingAndGlyphs">6</text>
<text x="35.8" y="333" textLength="5.4" lengthAdjust="spacingAndGlyphs">8</text>
<text x="470.800" y="333" textLength="5.4" lengthAdjust="spacingAndGlyphs">8</text>
<text x="30.0" y="306" textLength="11.2" lengthAdjust="spacingAndGlyphs">10</text>
<text x="470.800" y="306" textLength="11.2" lengthAdjust="spacingAndGlyphs">10</text>
<text x="42.9" y="450" textLength="14.200" lengthAdjust="spacingAndGlyphs">0.0</text>
<text x="88.9" y="450" textLength="14.200" lengthAdjust="spacingAndGlyphs">0.5</text>
<text x="134.9" y="450" textLength="14.200" lengthAdjust="spacingAndGlyphs">1.0</text>
<text x="181.9" y="450" textLength="14.200" lengthAdjust="spacingAndGlyphs">1.5</text>
<text x="227.9" y="450" textLength="14.200" lengthAdjust="spacingAndGlyphs">2.0</text>
<text x="274.9" y="450" textLength="14.200" lengthAdjust="spacingAndGlyphs">2.5</text>
<text x="320.9" y="450" textLength="14.200" lengthAdjust="spacingAndGlyphs">3.0</text>
<text x="367.9" y="450" textLength="14.200" lengthAdjust="spacingAndGlyphs">3.5</text>
<text x="413.9" y="450" textLength="14.200" lengthAdjust="spacingAndGlyphs">4.0</text>
<text x="460.9" y="450" textLength="14.200" lengthAdjust="spacingAndGlyphs">4.5</text>
</g>
</svg>

<!-- Disk-Info group -->
<div class="gb" style="left:491px;top:134px;width:138px;height:83px;"></div>
<div class="gl" style="left:499px;top:129px;width:43px;height:12px;background:#fcfcfd;"></div><div class="t" style="left:501px;top:129.05px;color:#0046d5;margin-left:-0.7px;transform-origin:0 0;transform:scaleX(0.865);">Disk-Info</div>
<div class="t" style="left:503px;top:144.05px;margin-left:-0.7px;transform-origin:0 0;transform:scaleX(0.897);">Typ:</div><div class="t v" style="left:543px;top:144.05px;margin-left:-0.7px;transform-origin:0 0;transform:scaleX(0.862);">DVD+R</div>
<div class="t" style="left:503px;top:161.05px;margin-left:-0.7px;transform-origin:0 0;transform:scaleX(0.846);">ID:</div><div class="t v" style="left:543px;top:161.05px;margin-left:-0.7px;transform-origin:0 0;transform:scaleX(0.843);">MCC 004</div>
<div class="t" style="left:503px;top:179.05px;margin-left:-0.7px;transform-origin:0 0;transform:scaleX(0.824);">Datum:</div><div class="t v" style="left:543px;top:179.05px;margin-left:-0.7px;transform-origin:0 0;transform:scaleX(0.858);">4 Mar 2006</div>
<div class="t" style="left:503px;top:197.05px;margin-left:-0.7px;transform-origin:0 0;transform:scaleX(0.841);">Label:</div><div class="t v" style="left:543px;top:197.05px;margin-left:-0.7px;transform-origin:0 0;transform:scaleX(0.869);">-</div>

<!-- Einstellungen group -->
<div class="gb" style="left:491px;top:225px;width:138px;height:203px;"></div>
<div class="gl" style="left:499px;top:220px;width:65px;height:12px;background:#fafafa;"></div><div class="t" style="left:500.5px;top:220.05px;color:#0046d5;margin-left:-0.7px;transform-origin:0 0;transform:scaleX(0.859);">Einstellungen</div>
<div class="t" style="left:499.700px;top:235.05px;margin-left:-0.7px;transform-origin:0 0;transform:scaleX(0.862);">Geschwindigkeit:</div>
<div class="edit" style="left:500px;top:250px;width:84px;height:21px;"></div>
<div class="t" style="left:504.500px;top:255.05px;margin-left:-0.7px;transform-origin:0 0;transform:scaleX(0.897);">8 X</div>
<div class="abs" style="left:567px;top:252px;width:15px;height:17px;border-radius:2px;background:linear-gradient(to bottom,#cfdcfd 0,#b4c8f6 100%);"></div>
<svg class="abs" style="left:567px;top:252px" width="15" height="17"><path d="M4 6.500 L7.500 10 L11 6.500" fill="none" stroke="#4d6185" stroke-width="2"/></svg>
<div class="abs" style="left:592px;top:248px;width:21px;height:21px;background:#ece9d8;border:1px solid;border-color:#fff #716f64 #716f64 #fff;box-shadow:inset -1px -1px 0 #aca899, inset 1px 1px 0 #f4f2e8;"></div>
<svg class="abs" style="left:596px;top:251px" width="15" height="16" viewBox="0 0 15 16"><rect x="0.700" y="0.700" width="13.600" height="14.600" fill="#fff" stroke="#000" stroke-width="1.150"/><path d="M3.800 8 V6.500 Q3.800 4.500 5.500 4.500 H7" fill="none" stroke="#008a00" stroke-width="1.300"/><path d="M6.500 2 L9.300 4.500 L6.500 7 Z" fill="#008a00"/><path d="M10.700 8.300 V9.500 Q10.700 11 9 11 H8" fill="none" stroke="#008a00" stroke-width="1.300"/><path d="M8.500 8.500 L5.500 11 L8.500 13.500 Z" fill="#008a00"/></svg>

<div class="t" style="left:503px;top:282.05px;margin-left:-0.7px;transform-origin:0 0;transform:scaleX(0.834);">Start:</div>
<div class="edit" style="left:554px;top:276px;width:60px;height:20px;"></div>
<div class="t" style="left:558px;top:280.05px;margin-left:-0.7px;transform-origin:0 0;transform:scaleX(0.835);">0000 MB</div>
<div class="t" style="left:502.700px;top:304.05px;margin-left:-0.7px;transform-origin:0 0;transform:scaleX(0.824);">Ende:</div>
<div class="edit" style="left:554px;top:299px;width:60px;height:20px;"></div>
<div class="t" style="left:558px;top:303.05px;margin-left:-0.7px;transform-origin:0 0;transform:scaleX(0.835);">4464 MB</div>

<div class="chk" style="left:502px;top:324px;"></div><div class="t" style="left:518.400px;top:325.05px;margin-left:-0.7px;transform-origin:0 0;transform:scaleX(0.873);">Schnelles Scannen</div>
<div class="chk" style="left:502px;top:345px;"></div><div class="t" style="left:518.400px;top:346.05px;margin-left:-0.7px;transform-origin:0 0;transform:scaleX(0.875);">C1/PIE anzeigen</div>
<div class="chk" style="left:502px;top:361px;"></div><div class="t" style="left:518.400px;top:362.05px;margin-left:-0.7px;transform-origin:0 0;transform:scaleX(0.871);">C2/PIF anzeigen</div>
<div class="chk" style="left:502px;top:378px;"></div><div class="t" style="left:518.400px;top:379.05px;margin-left:-0.7px;transform-origin:0 0;transform:scaleX(0.849);">Jitter anzeigen</div>
<div class="chk" style="left:502px;top:394px;"></div><div class="t" style="left:518.400px;top:395.05px;margin-left:-0.7px;transform-origin:0 0;transform:scaleX(0.873);">Lesegeschwindigkeit a</div>
<div class="chk" style="left:502px;top:410px;border-color:#cac8bb;background:#fff;"></div><div class="t" style="left:518.400px;top:411.05px;color:#aca899;margin-left:-0.7px;transform-origin:0 0;transform:scaleX(0.870);">Schreibgeschwindigkei</div>
<svg class="abs" style="left:502px;top:345px" width="13" height="80"><g fill="none" stroke="#21a121" stroke-width="2"><path d="M3 6 L5.500 8.5 L10 3.5"/><path d="M3 22 L5.500 24.5 L10 19.5"/><path d="M3 39 L5.500 41.5 L10 36.5"/><path d="M3 55 L5.500 57.5 L10 52.5"/><path d="M3 71 L5.500 73.5 L10 68.5" stroke="#cac8bb"/></g></svg>

<!-- quality -->
<div class="gb" style="left:491px;top:435px;width:138px;height:25px;"></div>
<div class="t" style="left:502.700px;top:443.05px;margin-left:-0.7px;transform-origin:0 0;transform:scaleX(0.847);">Qualitäts Score:</div>
<div class="t v" style="right:20.700px;top:443.05px;margin-right:-0.5px;transform-origin:100% 0;transform:scaleX(0.906);">97</div>
<div class="gb" style="left:491px;top:467px;width:138px;height:55px;"></div>
<div class="t" style="left:502.700px;top:477.05px;margin-left:-0.7px;transform-origin:0 0;transform:scaleX(0.832);">Fortschritt:</div><div class="t v" style="right:19.700px;top:477.05px;margin-right:-0.5px;transform-origin:100% 0;transform:scaleX(0.845);">100 %</div>
<div class="t" style="left:502.700px;top:493.05px;margin-left:-0.7px;transform-origin:0 0;transform:scaleX(0.835);">Position:</div><div class="t v" style="right:20.700px;top:493.05px;margin-right:-0.5px;transform-origin:100% 0;transform:scaleX(0.855);">4463 MB</div>
<div class="t" style="left:502.700px;top:508.05px;margin-left:-0.7px;transform-origin:0 0;transform:scaleX(0.862);">Geschwindigkeit:</div><div class="t v" style="right:19.700px;top:508.05px;margin-right:-0.5px;transform-origin:100% 0;transform:scaleX(0.893);">8.41 X</div>

<!-- bottom groups -->
<div class="gbe" style="left:14px;top:467px;width:144px;height:55px;"></div>
<div class="gl" style="left:22px;top:462px;width:54px;height:12px;background:#f5f4f0;"></div><div class="t" style="left:35.5px;top:462.05px;margin-left:-0.7px;transform-origin:0 0;transform:scaleX(0.837);">PI Errors</div>
<div class="abs" style="left:24px;top:464px;width:6px;height:6px;border:1px solid #000;background:#00ffff;"></div>
<div class="t" style="left:22.500px;top:478.05px;margin-left:-0.7px;transform-origin:0 0;transform:scaleX(0.877);">Durchschnitt</div><div class="t v" style="right:490.700px;top:478.05px;margin-right:-0.5px;transform-origin:100% 0;transform:scaleX(0.891);">0.57</div>
<div class="t" style="left:22.500px;top:493.05px;margin-left:-0.7px;transform-origin:0 0;transform:scaleX(0.823);">Maximum:</div><div class="t v" style="right:490.700px;top:493.05px;margin-right:-0.5px;transform-origin:100% 0;transform:scaleX(0.941);">7</div>
<div class="t" style="left:22.500px;top:508.05px;margin-left:-0.7px;transform-origin:0 0;transform:scaleX(0.831);">Gesamt:</div><div class="t v" style="right:490.700px;top:508.05px;margin-right:-0.5px;transform-origin:100% 0;transform:scaleX(0.888);">3486</div>

<div class="gbe" style="left:172px;top:467px;width:144px;height:55px;"></div>
<div class="gl" style="left:180px;top:462px;width:63px;height:12px;background:#f5f4f0;"></div><div class="t" style="left:193.500px;top:462.05px;margin-left:-0.7px;transform-origin:0 0;transform:scaleX(0.843);">PI Failures</div>
<div class="abs" style="left:182px;top:464px;width:6px;height:6px;border:1px solid #000;background:#ffff00;"></div>
<div class="t" style="left:181.700px;top:478.05px;margin-left:-0.7px;transform-origin:0 0;transform:scaleX(0.877);">Durchschnitt</div><div class="t v" style="right:331.500px;top:478.05px;margin-right:-0.5px;transform-origin:100% 0;transform:scaleX(0.891);">0.03</div>
<div class="t" style="left:181.700px;top:493.05px;margin-left:-0.7px;transform-origin:0 0;transform:scaleX(0.823);">Maximum:</div><div class="t v" style="right:331.500px;top:493.05px;margin-right:-0.5px;transform-origin:100% 0;transform:scaleX(0.941);">6</div>
<div class="t" style="left:181.700px;top:508.05px;margin-left:-0.7px;transform-origin:0 0;transform:scaleX(0.831);">Gesamt:</div><div class="t v" style="right:331.500px;top:508.05px;margin-right:-0.5px;transform-origin:100% 0;transform:scaleX(0.894);">314</div>

<div class="gbe" style="left:331px;top:467px;width:145px;height:41px;"></div>
<div class="gl" style="left:339px;top:462px;width:35px;height:12px;background:#f5f4f0;"></div><div class="t" style="left:352px;top:462.05px;margin-left:-0.7px;transform-origin:0 0;transform:scaleX(0.845);">Jitter</div>
<div class="abs" style="left:341px;top:464px;width:6px;height:6px;border:1px solid #000;background:#ff00ff;"></div>
<div class="t" style="left:340.500px;top:478.05px;margin-left:-0.7px;transform-origin:0 0;transform:scaleX(0.877);">Durchschnitt</div><div class="t v" style="right:172.500px;top:478.05px;margin-right:-0.5px;transform-origin:100% 0;transform:scaleX(0.853);">8.20 %</div>
<div class="t" style="left:340.500px;top:493.05px;margin-left:-0.7px;transform-origin:0 0;transform:scaleX(0.823);">Maximum:</div><div class="t v" style="right:173.200px;top:493.05px;margin-right:-0.5px;transform-origin:100% 0;transform:scaleX(0.852);">9.3 %</div>
<div class="t" style="left:340.500px;top:511.05px;margin-left:-0.7px;transform-origin:0 0;transform:scaleX(0.849);">PO Ausfälle:</div><div class="t v" style="right:172.500px;top:511.05px;margin-right:-0.5px;transform-origin:100% 0;transform:scaleX(0.970);">0</div>

</div>
</body></html>
